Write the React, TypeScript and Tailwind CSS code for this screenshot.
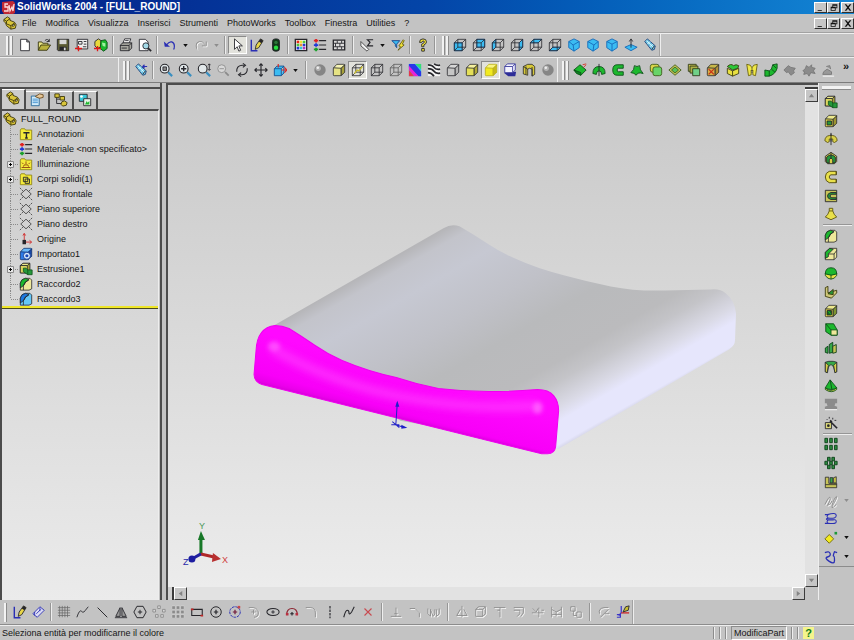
import React from "react";
import clsx from "clsx";

const K = "#26262b";
const GREEN = "#1cb82e";
const YELLOW = "#e9e04a";
const CYAN = "#3bbcf2";
const NAVY = "#2a2fb4";
const GRAY = "#8b8b8b";

const FACES = {
  front: "1.5,5.5 10.5,5.5 10.5,14.5 1.5,14.5",
  back: "5.5,1.5 14.5,1.5 14.5,10.5 5.5,10.5",
  left: "1.5,5.5 5.5,1.5 5.5,10.5 1.5,14.5",
  right: "10.5,5.5 14.5,1.5 14.5,10.5 10.5,14.5",
  top: "1.5,5.5 5.5,1.5 14.5,1.5 10.5,5.5",
  bottom: "1.5,14.5 5.5,10.5 14.5,10.5 10.5,14.5",
};

// Wireframe cube with one face filled, used by the standard views
const wire = (face?: keyof typeof FACES, color = K) => (
  <g fill="none" stroke={color} strokeWidth=".9" strokeLinejoin="round">
    {face && <polygon points={FACES[face]} fill={CYAN} stroke="#1668b8" />}
    <polygon points={FACES.front} />
    <polygon points={FACES.back} />
    <path d="M1.5 5.5l4-4M10.5 5.5l4-4M1.5 14.5l4-4M10.5 14.5l4-4" />
  </g>
);

const solid = (front: string, top: string, side: string, color = K) => (
  <g stroke={color} strokeWidth=".9" strokeLinejoin="round">
    <path d="M1.5 6.5q0-1 1-1.500h7q1 0 1 1v7.500q0 1-1 1h-7q-1 0-1-1z" fill={front} />
    <path d="M1.800 5.500l3.700-4h8q1 0 1 1l-4 3.500z" fill={top} />
    <path d="M10.500 6l4-4v8.500l-4 4z" fill={side} />
  </g>
);

const iso = (turn: number) => (
  <g fill={CYAN} stroke="#1668b8" strokeLinejoin="round">
    <path d="M8 1l6 3v7l-6 4-6-4V4z" />
    <path d={turn === 0 ? "M2 4l5 4 7-4M7 8l1 7" : turn === 1 ? "M2 4l7 4 5-4M9 8l-1 7" : "M2 4l6 3 6-3M8 7v8"} fill="none" />
  </g>
);

const lens = (
  <>
    <path d="M10.500 10.500l4.500 4.500" stroke="#3a8fc0" strokeWidth="2.500" />
    <circle cx="6.500" cy="6.500" r="5" fill="#e2e8ea" stroke={K} strokeWidth="1.200" />
  </>
);

const spyglass = (
  <>
    <path d="M2 4l3-3 9 8-1 4-3 1z" fill="#6cc4e4" stroke="#1c3f78" />
    <path d="M5 7l3-3M8 10l3-3M4 3l8 8" stroke="#e8fbff" />
    <path d="M10 13l3-4" stroke={K} />
  </>
);

const partLogo = (
  <g stroke="#3c3508" strokeLinejoin="round">
    <path d="M1 4l4-3 3 2v2l5 2 2 3-1 4-5 1-5-4-1-3-2-2z" fill="#d9c53a" />
    <path d="M1 4l3 2 4-3M4 6v3l5 2 4-3M9 11v4" fill="none" />
    <path d="M11 10l2-1v2l-2 1z" fill="#fff" />
  </g>
);

const ball = (
  <>
    <circle cx="8" cy="8" r="6.500" fill="#858585" />
    <circle cx="6" cy="6" r="3" fill="#b4b4b4" />
    <circle cx="5.500" cy="5.500" r="1.400" fill="#eee" />
  </>
);

const folder = (
  <path d="M1.500 3.500l1-1.500h4l1 1.500h7v11h-13z" fill="#f4ea3a" stroke="#8f8518" />
);

const plane = (
  <g fill="none" stroke="#444">
    <path d="M8 2.500l6 5.500-6 5.500L2 8z" />
    <path d="M1 1l4 4M15 1l-4 4M1 15l4-4M15 15l-4-4" strokeDasharray="2 1" />
  </g>
);

const pencil = (
  <>
    <path d="M1.500 2v12.500h7" stroke={NAVY} strokeWidth="1.600" fill="none" />
    <path d="M6 13l1-5 5-7 3 2-5 8z" fill="#e8d648" stroke={K} />
    <path d="M12 1l3 2-2 3-3-2z" fill={K} />
  </>
);

const fillet = (a: string, b: string) => (
  <g stroke={K} strokeLinejoin="round" strokeWidth=".9">
    <path d="M1.500 7q1-5 6-5.500h5l2 2v10l-3 1.500h-10z" fill={b} />
    <path d="M1.500 7q1-5 6-5.500l4 1.500Q7 5 5.500 9.500l-4 3z" fill={a} />
    <path d="M5 15V10q1-5 6-6.500" fill="none" />
  </g>
);

const light = (d: string) => (
  <>
    <path d={d} stroke="#fff" fill="none" transform="translate(1 1)" />
    <path d={d} stroke={GRAY} fill="none" />
  </>
);

const ICONS: Record<string, React.ReactNode> = {
  new: <path d="M3 1.500h7l3 3v10H3zM10 1.500v3h3" fill="#fff" stroke={K} />,
  open: (
    <g stroke="#35330c">
      <path d="M1.500 14V4.500h4l1 1.500h6v3" fill="#e8e484" />
      <path d="M1.500 14l3-6h11l-4 6z" fill="#b9b23c" />
      <path d="M9 3q3-3 5 1M14 1v3h-3" fill="none" stroke={K} />
    </g>
  ),
  save: (
    <>
      <path d="M1.500 1.500h13v13h-12l-1-1z" fill="#5c5c34" stroke={K} />
      <path d="M4 2h8v5H4z" fill="#d8d8d8" />
      <path d="M4 10h8v4H4z" fill={K} />
      <path d="M9 11h2v3H9z" fill="#ddd" />
    </>
  ),
  drawing: (
    <>
      <path d="M2.500 1.500h12v11h-12z" fill="#eee" stroke={K} />
      <path d="M4 4h4v3H4zM10 4h3M10 7h3M9 10h4" stroke={K} fill="none" />
      <path d="M0 12h8M4 9v6" stroke="#e01818" strokeWidth="1.500" />
    </>
  ),
  assembly: (
    <>
      <path d="M1 4l4-3 3 2v7l-4 2-3-3z" fill="#e8d83c" stroke={K} />
      <path d="M8 3l5-1 2 3v7l-4 3-4-3z" fill={GREEN} stroke="#0c4c16" />
      <path d="M9 5l4 1v4l-3-1z" fill="#a0f0a0" />
      <path d="M0 12h8M4 9v6" stroke="#e01818" strokeWidth="1.500" />
    </>
  ),
  print: (
    <g stroke={K}>
      <path d="M4.500 6l2-5h7l-2 5z" fill="#fff" />
      <path d="M1.500 8l3-2.500h10v6l-3 3h-10z" fill="#a8a8a0" />
      <path d="M1.500 8.500h10l3-3M11.500 8.500v6M3 11.500h6M7 3h4" fill="none" />
    </g>
  ),
  preview: (
    <>
      <path d="M1.500 1.500h7l3 3v10h-10z" fill="#fff" stroke={K} />
      <circle cx="9" cy="9" r="3.500" fill="#a5dbe8" stroke={K} />
      <path d="M11.500 11.500l3.500 3.500" stroke={K} strokeWidth="2" />
    </>
  ),
  undo: (
    <>
      <path d="M4 8Q7 3.500 10 4.500t3 4.500-1 4" fill="none" stroke={NAVY} strokeWidth="1.400" />
      <path d="M1 4l1 6h6z" fill={NAVY} />
    </>
  ),
  redo: light("M13 8Q10 3 6 4T2.500 9t1 4M14 4v5H9"),
  pointer: <path d="M4 1v12l3-3 2 5 2-1-2-5h4z" fill="#fff" stroke={K} />,
  sketch: pencil,
  traffic: (
    <>
      <rect x="4" y="1" width="8" height="14" rx="3" fill="#103818" stroke={K} />
      <circle cx="8" cy="5" r="2" fill="#2c7438" />
      <circle cx="8" cy="11" r="2.500" fill="#28e040" />
    </>
  ),
  palette: (
    <>
      <path d="M1.500 1.500h13v13h-13z" fill="#f4f4f4" stroke={K} strokeWidth="1.500" />
      <path d="M3 3h3v3H3z" fill="#e8281c" />
      <path d="M6.500 3h3v3h-3z" fill="#f0e030" />
      <path d="M10 3h3v3h-3zM3 6.500h3v3H3z" fill="#48c838" />
      <path d="M6.500 6.500h3v3h-3z" fill="#e89030" />
      <path d="M10 6.500h3v3h-3zM3 10h3v3H3z" fill="#2838d0" />
      <path d="M6.500 10h3v3h-3z" fill="#30c8d8" />
      <path d="M10 10h3v3h-3z" fill="#b038c0" />
    </>
  ),
  material: (
    <>
      <path d="M7 3h8M7 8h8M7 13h8" stroke={K} strokeWidth="1.300" />
      <path d="M1 3h5M3.500 1v4" stroke="#e02020" strokeWidth="2" />
      <path d="M1 8h5M3.500 6v4" stroke="#2038d8" strokeWidth="2" />
      <path d="M1 13h5M3.500 11v4" stroke="#18a028" strokeWidth="2" />
    </>
  ),
  bricks: (
    <>
      <path d="M1.500 2.500h13v11h-13z" fill="#ddd" stroke={K} strokeWidth="1.500" />
      <path d="M2 6h12M2 10h12M6 3v3M11 3v3M4 6v4M9 6v4M6 10v3M11 10v3" stroke={K} fill="none" />
    </>
  ),
  sigma: (
    <>
      <path d="M1 4v5l7 6 2-2z" fill="#f2f2f2" stroke="#444" />
      <path d="M15 2H8.500l3 3-3 4H15" fill="none" stroke={K} strokeWidth="1.300" />
    </>
  ),
  filter: (
    <>
      <path d="M1 3h9L6.500 7v4L5 9V7z" fill={CYAN} stroke="#14448c" />
      <path d="M14 2l-5 7 2 1-3 4 7-6-2-1 2-4z" fill="#f2e338" stroke="#635a10" />
    </>
  ),
  help: (
    <>
      <path d="M4 5q0-4 4-4t4 3.500q0 2-3 3.500v2H6.500V7q3-1 3-2.500T8 3.500 6.500 5z" fill="#f2e338" stroke={K} />
      <path d="M6.500 12h3v3h-3z" fill="#f2e338" stroke={K} />
    </>
  ),
  vFront: wire("front"),
  vBack: wire("back"),
  vLeft: wire("left"),
  vRight: wire("right"),
  vTop: wire("top"),
  vBottom: wire("bottom"),
  iso: iso(0),
  trimetric: iso(1),
  dimetric: iso(2),
  normal: (
    <>
      <path d="M1 10.500l7-3 7 3-7 4z" fill={CYAN} stroke="#1668b8" />
      <path d="M8 11V2M6 4l2-3 2 3" stroke={K} fill="none" />
    </>
  ),
  spy: spyglass,
  spyPrev: (
    <>
      {spyglass}
      <path d="M10 4h5M12 2l-2 2 2 2" stroke={NAVY} strokeWidth="1.300" fill="none" />
    </>
  ),
  zoomFit: (
    <>
      {lens}
      <path d="M4.500 4.500h4v4h-4z" fill="#8d8d8d" stroke={K} />
    </>
  ),
  zoomIn: (
    <>
      {lens}
      <path d="M3.500 6.500h6M6.500 3.500v6" stroke={K} strokeWidth="1.600" />
    </>
  ),
  zoomDrag: (
    <>
      {lens}
      <path d="M14 1v7M12.500 2.500L14 1l1.500 1.500M12.500 7L14 8.500 15.500 7" stroke={K} fill="none" />
    </>
  ),
  zoomSel: (
    <>
      <path d="M10.500 10.500l4 4" stroke={GRAY} strokeWidth="2" />
      <circle cx="6.500" cy="6.500" r="4.500" fill="#d8d8d8" stroke={GRAY} />
      <path d="M4 6.500h5" stroke={GRAY} />
    </>
  ),
  rotate: (
    <g fill="none" stroke={K} strokeWidth="1.200">
      <path d="M2 10Q1.500 3 8 2.500h3M14 6q.5 7-6 7.500H5" />
      <path d="M9 .5l3 2-3 2.500M7 11l-3 2.500L7 15.500" />
    </g>
  ),
  pan: (
    <path d="M8 1v14M1 8h14M6 3l2-2 2 2M6 13l2 2 2-2M3 6L1 8l2 2M13 6l2 2-2 2" fill="none" stroke={K} strokeWidth="1.300" />
  ),
  views: (
    <>
      <path d="M1.500 6.500h8v8h-8zM1.500 6.500l3-3h8l-3 3M9.500 14.500l3-3v-8" fill={CYAN} stroke="#154f90" />
      <path d="M6 1v4M10 8h6M13 5l3 3-3 3" stroke="#d82828" strokeWidth="1.300" fill="none" />
    </>
  ),
  ball,
  cubeYellow: solid("#e6e384", "#f6f4b4", "#a8a23a"),
  cubeEdges: (
    <>
      {wire(undefined)}
      <path d="M4 12l3-4 2 1 4-5" stroke="#c8bd30" strokeWidth="1.500" fill="none" />
    </>
  ),
  cubeWire: wire(),
  cubeHidden: wire(undefined, "#5a5a5a"),
  rainbow: (
    <>
      <path d="M1 1h14v14H1z" fill="#30c8f0" />
      <path d="M1 1h7l7 9v5h-3L1 5z" fill="#2836e8" />
      <path d="M1 3l11 12H7L1 8z" fill="#e820d8" />
      <path d="M1 8l6 7H1z" fill="#e83848" />
      <path d="M8 1h7v6z" fill="#38e070" />
    </>
  ),
  zebra: (
    <>
      <path d="M1 1h14v14H1z" fill="#f5f5f5" />
      <path d="M1 2q5 0 7 3t7 2M1 6.500q5 0 7 3t7 2M1 11q4 0 7 4M8 1q3 2 7 1.500" stroke={K} strokeWidth="2" fill="none" />
    </>
  ),
  cubeGray: solid("#c6c6c6", "#d6d6d6", "#b4b4b4"),
  cubeShade: solid("#e4df58", "#f4f09c", "#b0a834"),
  cubeFlat: solid("#f2ea20", "#faf680", "#c8bc18", "#b9ae18"),
  shadow: (
    <>
      <path d="M1 11l5 4h8l1-5z" fill="#2c2c98" />
      <path d="M2 4l3-3h9v7l-3 3H2z" fill="#f3f3ff" stroke="#38389c" />
      <path d="M2 4h9v7M11 4l3-3" fill="none" stroke="#38389c" />
    </>
  ),
  section: (
    <g stroke={K} strokeWidth=".9">
      <path d="M1.500 4l5-2.500h5l3 2.500v9l-3 2V7l-3-1-2 1v7l-5-1.500z" fill="#d8c93a" />
      <path d="M4.500 4v9M11.500 4.500V15M1.500 4l5 3" fill="none" />
    </g>
  ),
  gSweep: (
    <g stroke="#0d4f18">
      <path d="M1 8l7-6 7 6-6 6z" fill={GREEN} />
      <path d="M1 8l3 4 5 2v-3z" fill="#0d8420" />
      <path d="M11 2l4-1M12 5l3-3" stroke="#d83020" />
    </g>
  ),
  gRevolve: (
    <g stroke="#0d4f18">
      <path d="M1 12q0-8 7-8t7 8l-4 1q0-4-3-4t-3 4z" fill={GREEN} />
      <path d="M8 1v14" stroke={K} />
    </g>
  ),
  gPipe: (
    <g stroke="#0d4f18">
      <path d="M14 2H7Q2 2 2 8t5 6h7v-4H8.500Q7 10 7 8t1.500-2H14z" fill={GREEN} />
    </g>
  ),
  gLoft: (
    <g stroke="#0d4f18">
      <path d="M5 3q3 2 6 0 0 5 4 9-6-2-8 2-2-3-6-3 4-3 4-8z" fill={GREEN} />
    </g>
  ),
  gOffset: (
    <g stroke="#3e5a18">
      <rect x="1.500" y="1.500" width="10" height="9" rx="2.500" fill="#d9d548" />
      <rect x="4.500" y="4.500" width="10" height="10" rx="2.500" fill="#68d468" />
    </g>
  ),
  gRadiate: (
    <g stroke="#3e5a18">
      <path d="M1 8l7-6 7 6-7 6z" fill="#d0cc58" />
      <path d="M4 8l4-3.500L12 8l-4 3.500z" fill="#58c058" />
    </g>
  ),
  gKnit: (
    <g stroke="#2e3a18">
      <path d="M1.500 1.500h9v8h-9z" fill="#c8c050" />
      <path d="M3.500 3.500h9v8h-9z" fill="#aeb048" />
      <path d="M6.500 6.500h8v8h-8z" fill="#70d088" />
    </g>
  ),
  gDelete: (
    <>
      {solid("#d8b048", "#c8b848", "#b09038")}
      <path d="M3 7l6 6M9 7l-6 6" stroke="#c83018" strokeWidth="1.500" />
    </>
  ),
  gReplace: (
    <g stroke="#3a3a10">
      <path d="M1.500 6l6 3 7-3v6l-7 3-6-3z" fill="#e8e040" />
      <path d="M1.500 4q4-4 7-1 3-2 6 0l-1 3-6 2z" fill="#2cc838" />
      <path d="M7.500 9v6" />
    </g>
  ),
  gZip: (
    <g stroke="#6a620c">
      <path d="M2 1.500l4 1 2 3 2-3 4-1-2 13-3-1V8H7v5.500l-3 1z" fill="#f0e848" />
      <path d="M8 6v6" stroke={K} strokeDasharray="1 1" />
    </g>
  ),
  gExtend: (
    <g stroke="#0d4f18">
      <path d="M1 8l5 1q3-1 4-7l5-1v5q-2 7-9 9H1z" fill={GREEN} />
      <path d="M6 9v6M10 2l4 4M8.500 7l4 3.500" fill="none" />
    </g>
  ),
  dis1: <path d="M1 8l5-5 3 2 5 1-2 3 1 2-4 3-3-4-2 1z" fill={GRAY} stroke="#777" />,
  dis2: <path d="M1 9l3-3 1-3 3 2 3-3v3l4 1-2 3 2 3-5-1-2 4-2-3-4 1 1-3z" fill={GRAY} stroke="#777" />,
  dis3: (
    <>
      <path d="M2 13l1-3 4-3 5 3v3zM6 4l4-1 1 4" fill="#999" stroke="#777" />
      <path d="M2 15h13" stroke="#fff" />
    </>
  ),
  part: partLogo,
  tabProps: (
    <>
      <path d="M1.500 3.500h9v11h-9z" fill="#d2ecfa" stroke="#24689c" />
      <path d="M3 7h6M3 9h6M3 11h6" stroke="#3f8fd0" />
      <path d="M6 4l5-3 4 1v3l-4 1-3-1z" fill="#e8c898" stroke="#6c4c20" />
    </>
  ),
  tabConfig: (
    <>
      <path d="M3 4v8h5M3 7h5" fill="none" stroke={K} />
      <path d="M1 1h5v4H1zM7 4h5v4H7zM9 10l3-1 3 2-1 3-4 1-2-2z" fill="#d9c53a" stroke="#3c3508" />
    </>
  ),
  tabRender: (
    <>
      <path d="M1.500 1.500h9v8h-9z" fill="#38c8d8" stroke={K} />
      <path d="M6.500 6.500h8v8h-8z" fill="#e8f4e8" stroke={K} />
      <path d="M8 13l2-4 1 2 2-2v4z" fill={GREEN} />
      <circle cx="4" cy="4" r="1.500" fill="#fff" />
    </>
  ),
  annot: (
    <>
      {folder}
      <path d="M5 6.500h7M8.500 6v6M7 12.500h3" stroke={K} strokeWidth="1.600" fill="none" />
    </>
  ),
  lights: (
    <>
      {folder}
      <path d="M3 12h10M5 11l1-2h4l1 2M8 8V5M5 8L3.500 6.500M11 8l1.500-1.500" stroke="#8c3c10" fill="none" />
    </>
  ),
  bodies: (
    <>
      {folder}
      <path d="M5 6h5v5H5zM7 8h5v5H7z" fill="#e8e040" stroke={K} />
    </>
  ),
  plane,
  origin: (
    <>
      <path d="M6 11V2M4.500 4L6 1.500 7.500 4M7 11.500h7M12 9.500l2.500 2-2.500 2" stroke="#d02828" fill="none" />
      <path d="M4 9h4v5H4z" fill={K} />
    </>
  ),
  imported: (
    <>
      {solid("#2c7ce8", "#68b8f8", "#1848a8", "#10306c")}
      <circle cx="9" cy="10" r="4" fill="#d8ecff" stroke="#163c90" />
      <circle cx="9" cy="10" r="1.800" fill="#1848b8" />
    </>
  ),
  extrude: (
    <g stroke={K} strokeWidth=".9" strokeLinejoin="round">
      <path d="M1.500 4l3-2.500h8V9l-3 3.500h-8z" fill="#a8a038" />
      <path d="M1.500 4h8v8.500h-8z" fill="#dcd660" />
      <path d="M9.500 4l3-2.500h-8l-3 2.500z" fill="#ece88c" />
      <path d="M5 7h3l2 2h5v5.500h-5L5 11z" fill="#25983a" stroke="#0d4f18" />
      <path d="M10 9v5.500" stroke="#0d4f18" />
    </g>
  ),
  cut: (
    <>
      {solid("#d8d048", "#ece88c", "#9c9430")}
      <path d="M3.500 8h5v4.500h-5z" fill="#25983a" stroke={K} />
    </>
  ),
  filletG: fillet(GREEN, "#eee89a"),
  filletC: fillet("#1c78e0", "#66c8f8"),
  revolve: (
    <g stroke="#5a5210">
      <path d="M8 1v14" stroke={K} />
      <path d="M1 10q0-5 5-6h4q5 1 5 6l-3 2-2-1V8H6v3l-2 1z" fill="#d9d048" />
      <path d="M8 2v9" stroke={K} />
    </g>
  ),
  revCut: (
    <g stroke={K}>
      <path d="M1.500 6L8 1.500 14.500 6v6L12 14.500H4L1.500 12z" fill="#d8d048" />
      <path d="M3 7q5-5 10 0v6l-3 1v-4L8 8l-2 2v4l-3-1z" fill="#25983a" />
      <path d="M8 2v6" />
    </g>
  ),
  sweep: (
    <path d="M14 1.500H6Q1.500 3 1.500 8T6 14.500h8v-4H8Q6 10 6 8t2-2.500h6zM14 1.500v4M14 10.500v4" fill={YELLOW} stroke="#4a440c" />
  ),
  sweepCut: (
    <>
      <path d="M1.500 1.500h13v13h-13z" fill="#c8c458" stroke={K} />
      <path d="M14 4H8Q4 5 4 8t4 4h6v-2H9Q7 10 7 8t2-2h5z" fill="#25983a" stroke={K} />
    </>
  ),
  loft: (
    <g stroke="#5a5210">
      <path d="M6 1.500h4v3q1 4 4.500 7L8 14.500 1.500 11.500Q5 8.500 6 4.500z" fill={YELLOW} />
      <path d="M6 4.500h4" fill="none" />
    </g>
  ),
  chamfer: (
    <g stroke={K} strokeWidth=".9">
      <path d="M1.500 6l5-4.500h8v10l-3 3h-10z" fill="#eee89a" />
      <path d="M1.500 6l5-4.500 4 1L5 8v3l-3.500 2z" fill={GREEN} />
      <path d="M5 8h6.500v6.500M11.500 8l3-4" fill="none" />
    </g>
  ),
  dome: (
    <g stroke="#0d4f18">
      <path d="M1.500 8v3q3 4 6.500 4t6.500-4V8z" fill={YELLOW} />
      <path d="M1.500 9q0-7 6.500-7t6.500 7q-6 3-13 0z" fill={GREEN} />
      <path d="M8 10v5" />
    </g>
  ),
  rib: (
    <g stroke="#3a380c">
      <path d="M1.500 3l3-1.500V9l10-3v3l-6 6-7-2z" fill="#cfc878" />
      <path d="M4.500 10l6-5v6z" fill="#25983a" />
    </g>
  ),
  shell: (
    <>
      {solid("#d8d048", "#ece88c", "#7c9430")}
      <path d="M3.500 7.500h5v5h-5z" fill="#0e6e20" stroke={K} />
      <path d="M5 8l3 4" stroke={GREEN} />
    </>
  ),
  draft: (
    <g stroke="#0d4f18">
      <path d="M2 2h9l4 7v6H8L2 11z" fill={GREEN} />
      <path d="M8 9h7v6H8z" fill="#eee89a" />
      <path d="M2 2l6 7" />
    </g>
  ),
  rail: (
    <g stroke="#0d3f18">
      <path d="M1.500 8l3-2v8l-3-1zM6 4l4-2.500V13l-4 1z" fill="#35a848" />
      <path d="M10 6l4-2v9l-4 1z" fill="#c8c458" />
    </g>
  ),
  wrap: (
    <g stroke={K} strokeWidth=".9">
      <path d="M1.500 2.500l4-1h5l4 1v11l-2 1L11 8 8 5 5 8l-1 6.500-2.500-1z" fill="#35a848" />
      <path d="M1.500 2.500v11l2 1L5 6zM14.500 2.500v11l-2 1L11 6z" fill="#d8d048" />
    </g>
  ),
  cone: (
    <g stroke="#0d4f18">
      <path d="M1.500 10q6 6 13 0v2q-6 5-13 0z" fill={YELLOW} />
      <path d="M7 1l7.500 9q-6 4-13 0z" fill={GREEN} />
      <path d="M7 1l2 11" fill="none" />
    </g>
  ),
  slot: (
    <>
      <path d="M1 2h14v5h-2l-1 3 3 1v3H1v-3l3-1-1-3H1z" fill={GRAY} />
      <path d="M1 14.500h14" stroke="#fff" />
    </>
  ),
  wizard: (
    <>
      <path d="M1.500 7.500h7v7h-7z" fill="#dcd878" stroke={K} />
      <circle cx="5" cy="11" r="1.500" fill={K} />
      <path d="M7 6l8 8M7 5l2 2" stroke={K} strokeWidth="2" />
      <path d="M6 1v2M10 2v2M3 4h1M12 5h2" stroke={K} />
    </>
  ),
  pattern: (
    <g fill="#2c8c40" stroke="#0d3f18">
      <path d="M1 1.500h3v5H1zM6.500 1.500h3v5h-3zM12 1.500h3v5h-3zM1 9.500h3v5H1zM6.500 9.500h3v5h-3zM12 9.500h3v5h-3z" />
    </g>
  ),
  circPattern: (
    <g fill="#2c8c40" stroke="#0d3f18">
      <path d="M4 1.500h3v4H4zM9 1.500h3v4H9zM1 6h3v4H1zM12 6h3v4h-3zM4 10.500h3v4H4zM9 10.500h3v4H9zM6.500 6h3v4h-3z" />
    </g>
  ),
  mirror: (
    <g stroke={K} strokeWidth=".9">
      <path d="M1.500 2.500h4v7h9v5h-13z" fill="#c8c458" />
      <path d="M7 3h3v6H7z" fill="#35a848" />
      <path d="M11 3l3-1v7h-3zM1.500 11h13" fill="#d8d048" />
    </g>
  ),
  curveOff: light("M1 12Q6 2 7 4T4 13q4-1 5-5M9 13q3-9 5-10t-3 8 3 1"),
  helix: (
    <path d="M1 3h3q10-3 10 1t-9 3q-4 1-1 2h6q4-1 4 2t-9 2H1M5 3q-3 2 0 4M5 9q-3 2 0 4" fill="none" stroke={NAVY} strokeWidth="1.200" />
  ),
  refGeo: (
    <>
      <path d="M6 4l5 5-5 5-5-5z" fill="#f2ea20" stroke="#6a620c" />
      <path d="M12 1h3v3h-3z" fill="#1c9838" />
    </>
  ),
  curve: <path d="M1 3q5-2 6 1t-3 4 2 5 6-1-1-5 1-5l3 1" fill="none" stroke={NAVY} strokeWidth="1.500" />,
  dimension: (
    <g fill="#dcdcf4" stroke={NAVY}>
      <path d="M1 10l8-8 5 4-8 8zM5 10l5-5M3 8v4M9 3v4" />
    </g>
  ),
  grid: <path d="M1 3h14M1 6h14M1 9h14M1 12h14M3 1v13M6 1v13M9 1v13M12 1v13" stroke="#666" strokeWidth=".8" />,
  spline: <path d="M1 14q3-9 5-7t3 1 5-6" fill="none" stroke={K} />,
  line: <path d="M3 3l11 11" stroke={K} strokeWidth="1.100" />,
  mirrorSk: (
    <g stroke={K} fill="#999">
      <path d="M7 3v10H2zM9 3v10h5z" />
      <path d="M1 14.500h14" />
    </g>
  ),
  polygon: (
    <g fill="none" stroke={K} strokeWidth="1.100">
      <path d="M4.500 1.500h7L15 8l-3.500 6.500h-7L1 8zM8 5.500v5M5.500 8h5" />
    </g>
  ),
  circDots: (
    <path d="M6.500 1h3v3h-3zM12 5h3v3h-3zM10 11h3v3h-3zM4 11h3v3H4zM1 5h3v3H1z" fill="#d8d8d8" stroke={GRAY} />
  ),
  gridDots: (
    <path d="M1 1h4v4H1zM6 1h4v4H6zM11 1h4v4h-4zM1 6h4v4H1zM6 6h4v4H6zM11 6h4v4h-4zM1 11h4v4H1zM6 11h4v4H6zM11 11h4v4h-4z" fill={GRAY} stroke="#dcdcdc" strokeWidth=".6" />
  ),
  rect: (
    <>
      <path d="M2 5h12v7H2z" fill="none" stroke={K} strokeWidth="1.200" />
      <path d="M1 4h3v2H1zM12 11h3v2h-3z" fill="#c02828" />
    </>
  ),
  circle: (
    <>
      <circle cx="8" cy="8" r="6" fill="none" stroke={K} strokeWidth="1.100" />
      <path d="M8 5.500v5M5.500 8h5" stroke={K} strokeWidth="1.400" />
    </>
  ),
  circle3: (
    <>
      <circle cx="8" cy="8" r="6" fill="none" stroke={NAVY} strokeWidth="1.100" strokeDasharray="3 1" />
      <path d="M8 5.500v5M5.500 8h5" stroke="#701838" strokeWidth="1.400" />
      <path d="M11 1h3v3h-3z" fill="#c84848" />
    </>
  ),
  arcOff: light("M2 3h5q6 1 6 6t-5 5M5 8h5M7.500 5.500v5"),
  ellipse: (
    <>
      <ellipse cx="8" cy="8" rx="7" ry="4" fill="none" stroke={K} strokeWidth="1.200" />
      <path d="M8 6v4M6 8h4" stroke={K} />
    </>
  ),
  arc: (
    <>
      <path d="M2 11q0-7 6-7t6 7" fill="none" stroke="#8c2430" strokeWidth="1.400" />
      <path d="M1 9h3v3H1zM12 9h3v3h-3z" fill="#b83040" />
      <path d="M8 8v4M6 10h4" stroke={K} strokeWidth="1.300" />
    </>
  ),
  filletOff: light("M2 3h5q6 0 6 6v5"),
  centerline: <path d="M8 1v14" stroke={K} strokeWidth="1.300" strokeDasharray="3 1" />,
  splineB: <path d="M2 14q2-8 4-8t2 3 3-1l3-6" fill="none" stroke={K} strokeWidth="1.200" />,
  cross: <path d="M4 4l8 8M12 4l-8 8" stroke="#c84a50" strokeWidth="1.300" />,
  perp: light("M8 3v10M2 13h12M6 10h4"),
  trim: light("M2 4h6l5 5v5"),
  zig: light("M1 4v6l3 3V5l3 8 2-3V5M11 5v8l3-3V4"),
  triOff: light("M8 1v13M6 5L2 12h12l-4-7"),
  boxOff: light("M2 5h8v8H2zM2 5l3-3h8v8l-3 3M10 5l3-3"),
  tOff: light("M1 3h13M8 3v11M5 6h3"),
  cornerOff: light("M2 3h11v6l-3 4M2 6h7v4l-3 3"),
  splitOff: light("M2 4l4 4 2-4M1 9h13M9 3v11M12 6h3"),
  alignOff: light("M2 2v12M13 2v12M2 5l5 3 6-3M2 11h11M7 8v5"),
  copyOff: light("M2 2h5v5H2zM9 8h5v6H9zM5 7v5h4"),
  modOff: light("M3 10q-2-6 5-7h5M4 14l9-9M9 10h5"),
  sketch3d: (
    <>
      <path d="M6 9l-3 3M1 11h4v3H1" stroke="#3a34c8" strokeWidth="1.400" fill="none" />
      <path d="M6 1v8" stroke="#3a34c8" strokeWidth="1.400" />
      <path d="M6 9h9" stroke="#d03030" strokeWidth="1.600" />
      <path d="M8 8l3-6 4-1-1 5z" fill="#c8bc30" stroke={K} />
    </>
  ),
};

const Icon = ({ name }: { name: string }) => (
  <svg viewBox="0 0 16 16" className="size-3.5 shrink-0" aria-hidden="true">
    {ICONS[name]}
  </svg>
);

const Tool = ({ name, pressed }: { name: string; pressed?: boolean }) => (
  <button
    type="button"
    aria-label={name}
    className={clsx(
      "flex h-[18px] w-[19px] shrink-0 items-center justify-center border",
      pressed ? "border-[#8a8a8a] border-r-white border-b-white bg-[#e2e2dc]" : "border-transparent"
    )}
  >
    <Icon name={name} />
  </button>
);

const Arrow = ({ off }: { off?: boolean }) => (
  <button type="button" aria-label="more" className="flex h-4 w-3 shrink-0 items-center justify-center">
    <svg viewBox="0 0 6 4" className="h-[3px] w-[5px]">
      <path d="M0 0h6L3 4z" fill={off ? "#8d8d8d" : "#111"} />
    </svg>
  </button>
);

const Sep = ({ wide }: { wide?: boolean }) => (
  <div className={clsx("flex shrink-0 justify-center", wide ? "w-[9px]" : "w-[6px]")}>
    <div className="h-[18px] w-[2px] border-l border-[#969696] bg-[#eeeeee]" />
  </div>
);

const Grip = () => (
  <div className="mr-px ml-1 flex shrink-0 gap-px">
    <div className="h-[19px] w-[3px] border-r border-[#8c8c8c] bg-[#f2f2f2]" />
    <div className="h-[19px] w-[3px] border-r border-[#8c8c8c] bg-[#f2f2f2]" />
  </div>
);

// "|" separator, "||" wide separator, "v" / "vo" drop arrow, leading "*" pressed button
const Tools = ({ items }: { items: string }) => (
  <>
    {items.split(" ").map((it, i) => {
      if (it === "|" || it === "||") return <Sep key={i} wide={it === "||"} />;
      if (it === "v" || it === "vo") return <Arrow key={i} off={it === "vo"} />;
      return <Tool key={i} name={it.replace("*", "")} pressed={it.startsWith("*")} />;
    })}
  </>
);

const WindowButtons = () => (
  <div className="flex shrink-0">
    {[
      { label: "Minimize", d: "M2 8h5v1H2z" },
      { label: "Restore", d: "M4 1h6v5H8v3H2V4h2zM5 3v1h3v1h1V3zM3 6v2h4V6z" },
      { label: "Close", d: "M2 1h2l2 2.500L8 1h2L7 5l3 4H8L6 6.500 4 9H2l3-4z" },
    ].map((b) => (
      <button
        key={b.label}
        type="button"
        aria-label={b.label}
        className="flex h-[11px] w-[13px] items-center justify-center border border-white border-r-[#303030] border-b-[#303030] bg-[#c6c6c6] last:ml-px"
      >
        <svg viewBox="0 0 12 10" className="h-[9px] w-[10px]">
          <path d={b.d} fill="#111" fillRule="evenodd" />
        </svg>
      </button>
    ))}
  </div>
);

const MENU = ["File", "Modifica", "Visualizza", "Inserisci", "Strumenti", "PhotoWorks", "Toolbox", "Finestra", "Utilities", "?"];

const TREE = [
  { icon: "annot", label: "Annotazioni" },
  { icon: "material", label: "Materiale <non specificato>" },
  { icon: "lights", label: "Illuminazione", plus: true },
  { icon: "bodies", label: "Corpi solidi(1)", plus: true },
  { icon: "plane", label: "Piano frontale" },
  { icon: "plane", label: "Piano superiore" },
  { icon: "plane", label: "Piano destro" },
  { icon: "origin", label: "Origine" },
  { icon: "imported", label: "Importato1" },
  { icon: "extrude", label: "Estrusione1", plus: true },
  { icon: "filletG", label: "Raccordo2" },
  { icon: "filletC", label: "Raccordo3" },
];

const SIDE_TOOLS = [
  "extrude", "cut", "revolve", "revCut", "sweep", "sweepCut", "loft", "|",
  "filletG", "chamfer", "dome", "rib", "shell", "draft", "rail", "wrap", "cone", "slot", "wizard", "|",
  "pattern", "circPattern", "mirror", "curveOff", "helix", "refGeo", "curve",
];

function FeatureTree() {
  return (
    <aside className="flex w-[162px] shrink-0 flex-col border-r-2 border-r-[#4c4c4c] pt-1">
      <div className="flex h-[22px] shrink-0 border-t-2 border-l-2 border-[#4c4c4c]" role="tablist">
        {["part", "tabProps", "tabConfig", "tabRender"].map((t, i) => (
          <button
            key={t}
            type="button"
            role="tab"
            aria-label={t}
            aria-selected={i === 0}
            className={clsx(
              "flex w-6 justify-center border-t border-r-2 border-t-white border-r-[#4c4c4c] pt-px",
              i === 0 ? "bg-[#cccccc]" : "mt-0.5"
            )}
          >
            <Icon name={t} />
          </button>
        ))}
      </div>
      <div className="mr-px flex-1 border-t-2 border-r border-l-2 border-t-[#4c4c4c] border-r-[#eeeeee] border-l-[#4c4c4c] bg-linear-to-b from-[#cacaca] to-[#ebebeb]">
        <ul>
          <li className="flex h-[15px] items-center gap-1">
            <span className="flex pl-px">
              <Icon name="part" />
            </span>
            FULL_ROUND
          </li>
          {TREE.map((row, i) => (
            <li key={row.label} className="flex h-[15px] items-center whitespace-nowrap">
              <svg className="h-[15px] w-[17px] shrink-0" viewBox="0 0 17 15">
                <path d={i === TREE.length - 1 ? "M8.500 0V8M9 8.500h8" : "M8.500 0V15M9 8.500h8"} stroke="#8a8a8a" strokeDasharray="1 1" fill="none" />
                {row.plus && (
                  <>
                    <path d="M5.500 5.500h6v6h-6z" fill="#e8e8e8" stroke="#8a8a8a" />
                    <path d="M7 8.500h3M8.500 7v3" stroke="#000" />
                  </>
                )}
              </svg>
              <Icon name={row.icon} />
              <span className="pl-1">{row.label}</span>
            </li>
          ))}
        </ul>
        <div className="h-[3px] border-b border-[#4a4a20] bg-[#efe628]" />
      </div>
    </aside>
  );
}

function Model() {
  return (
    <svg viewBox="168 85 636 501" preserveAspectRatio="xMidYMid slice" className="absolute inset-0 size-full" aria-label="FULL_ROUND">
      <defs>
        <linearGradient id="top" gradientUnits="userSpaceOnUse" x1="275" y1="325" x2="399" y2="543">
          <stop offset="0" stopColor="#b6b6b9" />
          <stop offset=".05" stopColor="#c3c4cb" />
          <stop offset=".16" stopColor="#c6c8d2" />
          <stop offset=".34" stopColor="#c0c1c8" />
          <stop offset=".5" stopColor="#b9babc" />
          <stop offset=".68" stopColor="#bbbbbd" />
          <stop offset=".75" stopColor="#c4c4c8" />
          <stop offset=".84" stopColor="#dadae6" />
          <stop offset=".89" stopColor="#e6e6fc" />
          <stop offset=".97" stopColor="#e6e6fc" />
          <stop offset="1" stopColor="#c8c8d8" />
        </linearGradient>
        <linearGradient id="front" gradientUnits="userSpaceOnUse" x1="400" y1="370" x2="385" y2="424">
          <stop offset="0" stopColor="#ff08ff" />
          <stop offset=".7" stopColor="#f800f8" />
          <stop offset="1" stopColor="#d800d8" />
        </linearGradient>
        <filter id="soft" x="-20%" y="-20%" width="140%" height="140%">
          <feGaussianBlur stdDeviation="4" />
        </filter>
        <filter id="softer" x="-50%" y="-50%" width="200%" height="200%">
          <feGaussianBlur stdDeviation="2" />
        </filter>
        <clipPath id="frontClip">
          <path d="M275 325Q282 325 289 328Q302 336 315 345Q328 354 342 360Q368 371 396 377Q417 384 438 388Q463 391 488 391Q512 391 537 389Q548 389 553 395Q558 401 558 410L555 446Q554 453 547 453H541L262 384Q254 381 254 374L256 350Q257 327 275 325Z" />
        </clipPath>
      </defs>

      <path d="M272 326L443 228Q451 223 459 226Q473 234 488 244Q500 252 514 258Q538 269 564 275Q586 281 610 286Q636 291 664 290L710 289Q719 288 725 293Q734 300 735 313L734 340Q734 345 728 349L558 448L400 420Z" fill="url(#top)" />

      <g clipPath="url(#frontClip)">
        <path d="M250 320H565V460H250z" fill="url(#front)" />
        <path d="M272 348Q330 382 400 396T536 405" stroke="#ff50ff" strokeWidth="7" strokeOpacity=".7" fill="none" filter="url(#soft)" />
        <path d="M254 385L545 457" stroke="#b000b8" strokeWidth="4" fill="none" filter="url(#softer)" />
        <ellipse cx="537" cy="407" rx="5" ry="6" fill="#ff68ff" fillOpacity=".8" filter="url(#softer)" />
        <ellipse cx="274" cy="346" rx="6" ry="5" fill="#ff60ff" fillOpacity=".7" filter="url(#softer)" />
        <path d="M552 405V442" stroke="#ff50ff" strokeWidth="4" filter="url(#softer)" />
      </g>
      <path d="M275 325Q282 325 289 328Q302 336 315 345Q328 354 342 360Q368 371 396 377Q417 384 438 388Q463 391 488 391Q512 391 537 389Q548 389 553 395Q558 401 558 410L555 446Q554 453 547 453H541L262 384Q254 381 254 374L256 350Q257 327 275 325Z" fill="none" stroke="#f000f0" />

      <g stroke="#2020c8" fill="#2020c8">
        <path d="M395.500 424L397 402M391 424h8M392 421l7 6M395 424l10 3" />
        <path d="M395 406l2-6 2 6zM401 424l6 3-6 1z" stroke="none" />
      </g>

      <path d="M201 553V537" stroke="#187828" strokeWidth="3" />
      <path d="M198 539l3-9 4 9z" fill="#187828" />
      <path d="M201 553l13 3" stroke="#b02828" strokeWidth="3" />
      <path d="M213 552l8 6-9 3z" fill="#b83030" />
      <path d="M201 553l-9 5" stroke="#2020a0" strokeWidth="3" />
      <circle cx="192" cy="558" r="3.500" fill="#1c1ca0" />
      <g className="font-['Liberation_Sans'] text-[9px]">
        <text x="199" y="528" fill="#4c9858">Y</text>
        <text x="222" y="562" fill="#d04040">X</text>
        <text x="183" y="564" fill="#2828a8">Z</text>
      </g>
    </svg>
  );
}

const ScrollButton = ({ label, d }: { label: string; d: string }) => (
  <button
    type="button"
    aria-label={label}
    className="flex size-[13px] shrink-0 items-center justify-center border border-white border-r-[#3c3c3c] border-b-[#3c3c3c] bg-[#c6c6c6]"
  >
    <svg viewBox="0 0 8 8" className="size-[7px]">
      <path d={d} fill="#848484" />
    </svg>
  </button>
);

export default function App() {
  return (
    <div className="flex h-screen flex-col overflow-hidden bg-[#c3c3c3] font-['Liberation_Sans',Arial,sans-serif] text-[9px] leading-3 text-[#161616]">
      <header className="flex h-[14px] shrink-0 items-center bg-linear-to-r from-[#062088] via-[#0445a8] to-[#1485d4] pl-0.5 text-white">
        <svg viewBox="0 0 13 13" className="size-[13px]">
          <path d="M0 1l11-1 2 2v10l-2 1H2l-2-3z" fill="#c02834" />
          <path d="M6 3H3v3h3v4H2M7 4l1 6 2-4 1 4 1-7" fill="none" stroke="#fbdada" strokeWidth="1.300" />
        </svg>
        <h1 className="flex-1 pl-0.5 text-[10px] font-bold">SolidWorks 2004 - [FULL_ROUND]</h1>
        <WindowButtons />
      </header>

      <nav className="flex h-[19px] shrink-0 items-center border-b border-[#a2a2a2] pl-[3px]">
        <Icon name="part" />
        <div className="flex flex-1 gap-[9px] pl-[5px]">
          {MENU.map((m) => (
            <button key={m} type="button">
              {m}
            </button>
          ))}
        </div>
        <WindowButtons />
      </nav>

      <div className="flex h-6 shrink-0 items-center border-t border-b border-t-[#eeeeee] border-b-[#a2a2a2] pl-0.5">
        <Grip />
        <div className="flex items-center pl-px">
          <Tools items="new open save drawing assembly | print preview | undo v redo vo | *pointer sketch traffic | palette material bricks || sigma v filter | help |" />
        </div>
        <Grip />
        <div className="flex items-center">
          <Tools items="vFront vBack vLeft vRight vTop vBottom iso trimetric dimetric normal spy" />
        </div>
        <div className="h-full w-[2px] border-l border-[#a2a2a2] bg-[#eeeeee]" />
      </div>

      <div className="flex h-[26px] shrink-0 items-center border-t border-b border-t-[#eeeeee] border-b-[#7c7c7c] pl-[118px]">
        <div className="h-full w-px bg-[#eeeeee]" />
        <Grip />
        <div className="flex items-center">
          <Tools items="spyPrev | zoomFit zoomIn zoomDrag zoomSel rotate pan views v || ball cubeYellow *cubeEdges cubeWire cubeHidden rainbow zebra cubeGray cubeShade *cubeFlat shadow section ball" />
        </div>
        <div className="h-full w-px bg-[#eeeeee]" />
        <Grip />
        <div className="flex flex-1 items-center justify-between">
          <Tools items="gSweep gRevolve gPipe gLoft gOffset gRadiate gKnit gDelete gReplace gZip gExtend dis1 dis2 dis3" />
        </div>
        <button type="button" className="mb-2 w-4 text-center text-[11px] font-bold">
          »
        </button>
      </div>

      <main className="flex min-h-0 flex-1">
        <FeatureTree />
        <section className="ml-1 flex min-w-0 flex-1 flex-col border-t-2 border-l-2 border-[#4c4c4c]">
          <div className="flex min-h-0 flex-1">
            <div className="relative min-w-0 flex-1 bg-linear-to-b from-[#c8c8c8] to-[#ececec]">
              <Model />
            </div>
            <div className="flex w-[13px] shrink-0 flex-col bg-[#e2e2e2]">
              <div className="h-1 border-b-2 border-[#3c3c3c] bg-[#d0d0d0]" />
              <ScrollButton label="Scroll up" d="M4 2l3 4H1z" />
              <div className="flex-1" />
              <ScrollButton label="Scroll down" d="M1 2h6L4 6z" />
            </div>
          </div>
          <div className="flex shrink-0 bg-[#e2e2e2]">
            <div className="w-1.5 border-r-2 border-[#3c3c3c] bg-[#d0d0d0]" />
            <ScrollButton label="Scroll left" d="M6 1v6L2 4z" />
            <div className="flex-1" />
            <ScrollButton label="Scroll right" d="M2 1l4 3-4 3z" />
            <div className="w-[13px] bg-[#c3c3c3]" />
          </div>
        </section>

        <aside className="flex w-9 shrink-0 flex-col border-l border-[#eeeeee]">
          <div className="mx-[3px] mt-[3px] h-1 shrink-0 border-b border-[#8c8c8c] bg-[#f2f2f2]" />
          <div className="mt-[3px] flex h-[474px] shrink-0 flex-col justify-between border-b border-[#8c8c8c] pl-0.5">
            {SIDE_TOOLS.map((t, i) =>
              t === "|" ? (
                <div key={i} className="mx-0.5 h-[2px] border-t border-[#969696] bg-[#eeeeee]" />
              ) : (
                <div key={i} className="flex items-center">
                  <Tool name={t} />
                  {["curveOff", "refGeo", "curve"].includes(t) && <Arrow off={t === "curveOff"} />}
                </div>
              )
            )}
          </div>
        </aside>
      </main>

      <div className="flex h-[25px] shrink-0 items-center border-b border-[#8c8c8c]">
        <div className="mr-[3px] ml-1 h-[19px] w-[3px] border-r border-[#8c8c8c] bg-[#f2f2f2]" />
        <Tools items="sketch dimension | grid spline line mirrorSk polygon circDots gridDots rect circle circle3 arcOff ellipse arc filletOff centerline splineB cross || perp trim zig || triOff boxOff tOff cornerOff splitOff alignOff copyOff || modOff sketch3d" />
        <div className="h-full w-[2px] border-l border-[#a2a2a2] bg-[#eeeeee]" />
      </div>

      <footer className="flex h-[15px] shrink-0 items-center border-t border-[#eeeeee] pl-0.5">
        <span className="flex-1">Seleziona entità per modificarne il colore</span>
        <div className="flex gap-1 pr-1">
          {[0, 1, 2].map((i) => (
            <div key={i} className="h-3 w-[2px] border-l border-[#8c8c8c] bg-[#eeeeee]" />
          ))}
        </div>
        <div className="border border-[#8c8c8c] border-r-white border-b-white px-0.5">ModificaPart</div>
        <div className="flex gap-1 pl-1">
          {[0, 1].map((i) => (
            <div key={i} className="h-3 w-[2px] border-l border-[#8c8c8c] bg-[#eeeeee]" />
          ))}
        </div>
        <button type="button" className="mr-10 ml-1 h-3 w-[11px] bg-[#f4f48c] text-center text-[11px] font-bold text-[#0c7c20]">
          ?
        </button>
      </footer>
    </div>
  );
}
